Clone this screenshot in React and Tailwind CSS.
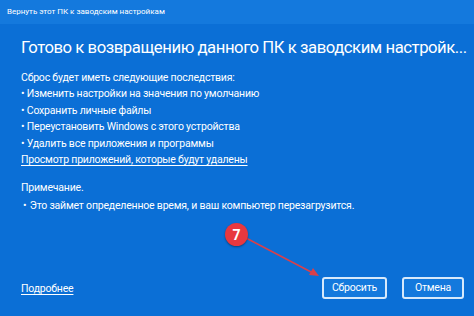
import React from "react";

export default function App() {
  return (
    <div className="w-[474px] h-[316px] bg-[#0b6fd6] text-white overflow-hidden relative flex flex-col" style={{ fontFamily: 'Roboto, "Noto Sans", sans-serif' }}>
      <div className="h-[24px] shrink-0 bg-[#1479dd] flex items-center px-[7px] text-[8px] leading-none">
        Вернуть этот ПК к заводским настройкам
      </div>
      <div className="flex-1 flex flex-col pl-[21px] pr-[10px] pt-[12px]">
        <div className="text-[16.7px] tracking-[-0.45px] leading-[24px] whitespace-nowrap">
          Готово к возвращению данного ПК к заводским настройк...
        </div>
        <div className="mt-[10px] flex flex-col text-[10.5px] tracking-[-0.2px] leading-[16.4px]">
          <div>Сброс будет иметь следующие последствия:</div>
          <div>• Изменить настройки на значения по умолчанию</div>
          <div>• Сохранить личные файлы</div>
          <div>• Переустановить Windows с этого устройства</div>
          <div>• Удалить все приложения и программы</div>
          <div className="underline underline-offset-2">Просмотр приложений, которые будут удалены</div>
          <div className="mt-[12px]">Примечание.</div>
          <div className="mt-[1px]">
            <span className="pl-[2px]">•</span>{" "}<span className="pl-[1px]">Это займет определенное время, и ваш компьютер перезагрузится.</span>
          </div>
        </div>
        <div className="mt-auto mb-[17px] flex items-end justify-between">
          <div className="text-[10.5px] tracking-[-0.2px] underline underline-offset-2 mb-[2px]">Подробнее</div>
          <div className="flex gap-[15px]">
            <button className="w-[65px] h-[22px] shrink-0 rounded-[3px] border-2 border-[#d7e9fb] bg-[#1479dd] text-[10.5px] tracking-[-0.2px] leading-none">Сбросить</button>
            <button className="w-[62px] h-[22px] shrink-0 rounded-[3px] border-2 border-[#d7e9fb] bg-[#1479dd] text-[10.5px] tracking-[-0.2px] leading-none">Отмена</button>
          </div>
        </div>
      </div>
      <svg className="absolute left-0 top-0 pointer-events-none" width="474" height="316">
        <line x1="246" y1="238" x2="313" y2="273" stroke="#d9404a" strokeWidth="1.5" />
        <polygon points="319,276 309,275 313,268" fill="#d9404a" />
      </svg>
      <div className="absolute left-[225px] top-[223px] w-[23px] h-[23px] rounded-full bg-[#e8383f] flex items-center justify-center text-[14px] font-bold leading-none shadow-[0_1px_2px_rgba(0,0,0,0.4)]">
        7
      </div>
    </div>
  );
}
